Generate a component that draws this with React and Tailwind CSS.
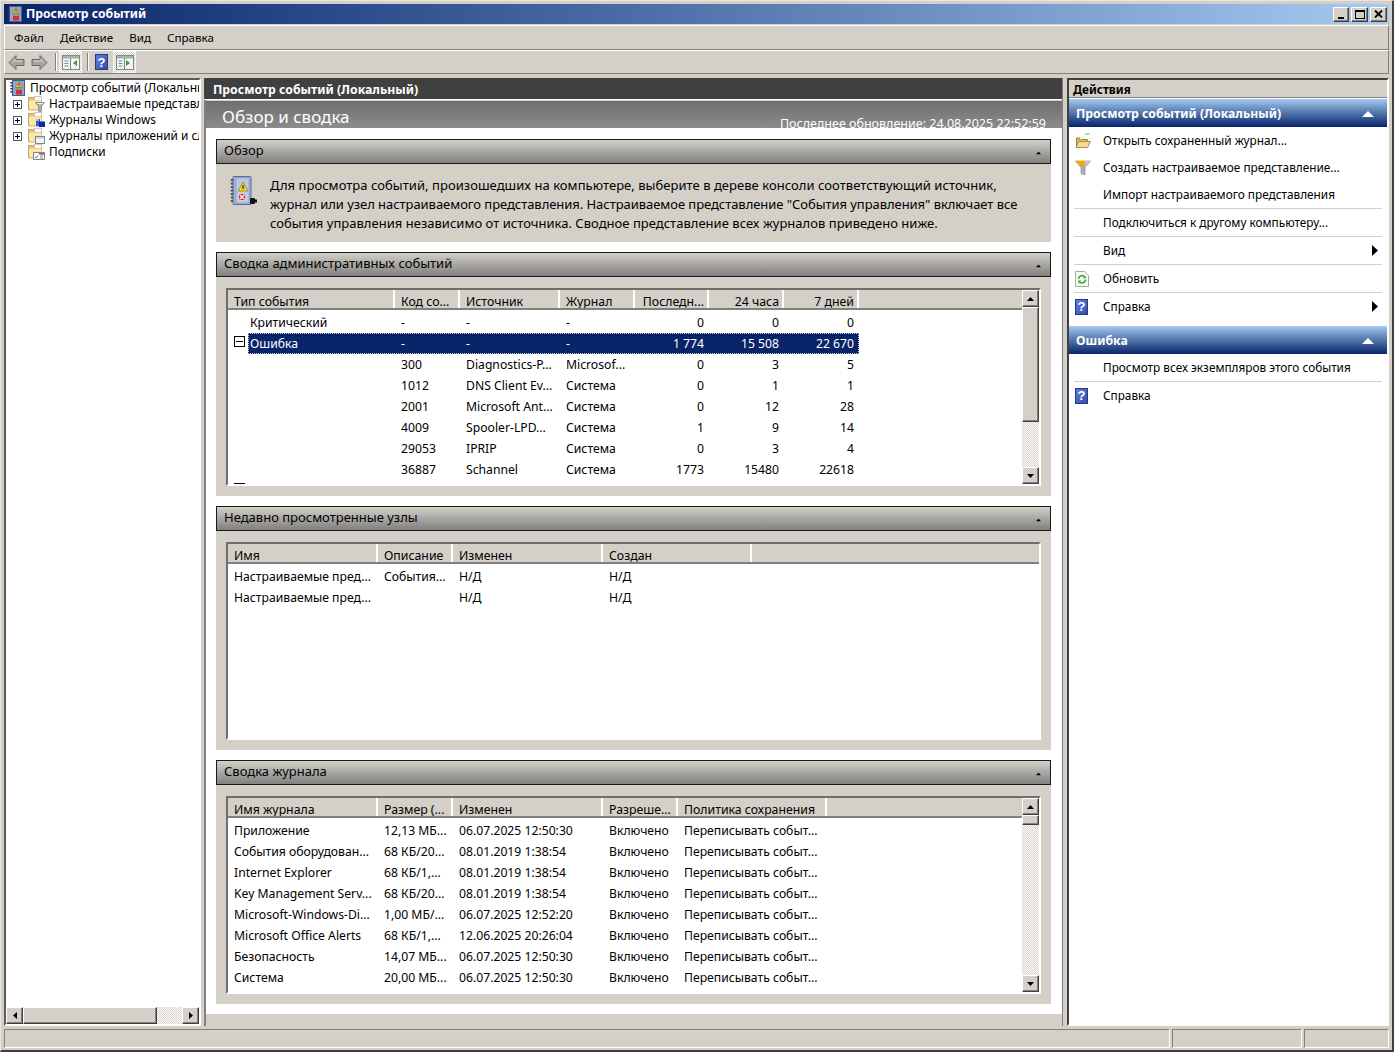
import React from 'react';

const bevel = 'border border-t-white border-l-white border-r-[#404040] border-b-[#404040] shadow-[inset_-1px_-1px_0_#808080] bg-[#d4d0c8]';
const checker = 'bg-[repeating-conic-gradient(#d4d0c8_0_25%,#ffffff_0_50%)] bg-[length:2px_2px]';

// little pictures
const LogIcon = ({ size = 16 }) => (
    <svg width={size} height={size} viewBox="0 0 16 16" className="shrink-0">
        <rect x="2.5" y="0.5" width="12" height="15" fill="#8ea4d4" stroke="#4a5a8c" />
        <path d="M1.5 2v1.5M1.5 5v1.5M1.5 8v1.5M1.5 11v1.5" stroke="#333" strokeWidth="2" />
        <path d="M9 1.5l3.5 6h-7z" fill="#f4d024" stroke="#8a6d00" strokeWidth="0.6" />
        <rect x="8.6" y="3.5" width="0.9" height="2.4" fill="#222" />
        <rect x="6" y="10" width="6" height="4.5" fill="#d03030" />
        <path d="M7.2 10V8.8a1.8 1.8 0 0 1 3.6 0V10" fill="none" stroke="#777" />
    </svg>
);

const BigLogIcon = () => (
    <svg width="28" height="32" viewBox="0 0 28 32" className="shrink-0">
        <rect x="3" y="0.5" width="18" height="28" rx="1" fill="#9fb4dc" stroke="#5a6a90" />
        <rect x="6" y="2" width="13" height="25" fill="#b8c8e8" stroke="#8496c0" strokeWidth="0.6" />
        <path d="M2 3v24" stroke="#555" strokeWidth="2.4" strokeDasharray="2 1.5" />
        <path d="M13 6l5 9h-10z" fill="#f6d425" stroke="#9a7a00" strokeWidth="0.7" />
        <rect x="12.4" y="9" width="1.3" height="4" fill="#333" />
        <circle cx="12" cy="21" r="4" fill="#d23a3a" stroke="#fff" strokeWidth="0.8" />
        <path d="M10 19l4 4M14 19l-4 4" stroke="#fff" strokeWidth="1.2" />
        <rect x="20" y="22" width="5" height="6" rx="1" fill="#111" />
        <rect x="24" y="23.5" width="3" height="3" fill="#111" />
    </svg>
);

const Folder = ({ overlay }) => (
    <svg width="17" height="16" viewBox="0 0 17 16" className="shrink-0">
        <path d="M0.5 1.5h5l1 1.5h7v11h-13z" fill="#e8c878" stroke="#c0a468" />
        <rect x="6.5" y="0.5" width="7" height="4" fill="#fff" stroke="#b0a890" strokeWidth="0.6" />
        <path d="M1 4.5h12.5v9H1z" fill="#fbe7a8" />
        {overlay === 'funnel' && (
            <g>
                <path d="M7.5 6.5h9l-3.2 4v5h-2.6v-5z" fill="#aeb4bc" stroke="#6a7078" strokeWidth="0.7" />
                <path d="M9 7.5h6" stroke="#e8ecf0" />
            </g>
        )}
        {overlay === 'win' && (
            <g>
                <rect x="8" y="7" width="4" height="7" fill="#3858d8" />
                <rect x="11" y="9.5" width="6" height="5.5" fill="#102a98" />
                <rect x="8" y="7" width="3" height="2" fill="#a0b8f4" />
            </g>
        )}
        {overlay === 'app' && (
            <g>
                <rect x="7.5" y="8.5" width="9" height="7" fill="#f4f4f4" stroke="#808890" />
                <rect x="8" y="9" width="8" height="1.5" fill="#c8ccd4" />
            </g>
        )}
        {overlay === 'sub' && (
            <g>
                <rect x="5.5" y="8.5" width="11" height="7" fill="#fff" stroke="#808890" />
                <rect x="11" y="9" width="5" height="1.6" fill="#d04040" />
                <path d="M7 13l1 1 2-3M12 12h3M12 14h3" stroke="#4060a0" strokeWidth="0.8" fill="none" />
            </g>
        )}
    </svg>
);

const HelpIcon = () => (
    <span className="w-[13px] h-[16px] shrink-0 flex items-center justify-center bg-gradient-to-br from-[#5f7fe0] to-[#3450a8] border border-[#27387c] text-white text-[13px] leading-none font-bold font-['Liberation_Sans']">?</span>
);

const OpenIcon = () => (
    <svg width="16" height="16" viewBox="0 0 16 16">
        <path d="M10 1h5" stroke="#50d050" />
        <path d="M1.5 5h4l1 1.5h6v7h-11z" fill="#d8b860" stroke="#a08840" />
        <path d="M1 14.5l2.5-6h12l-3 6z" fill="#f2dc98" stroke="#a89050" />
        <path d="M5 5.5h6M6 3.5h5" stroke="#f8f4e4" />
    </svg>
);

const FunnelIcon = () => (
    <svg width="16" height="16" viewBox="0 0 16 16">
        <path d="M0.5 1h15l-5.5 6.5V15l-4-1.5V7.5z" fill="#a8aeb8" stroke="#7c8290" strokeWidth="0.6" />
        <path d="M0.5 1h15L11 6H5z" fill="#f6a800" />
        <path d="M10 1h5.5L11 6h-1z" fill="#c0c4cc" />
    </svg>
);

const RefreshIcon = () => (
    <svg width="14" height="16" viewBox="0 0 14 16">
        <path d="M0.5 0.5h9l4 4v11h-13z" fill="#fbfbf6" stroke="#a8a8a0" />
        <path d="M3.5 8a3.5 3.5 0 0 1 6.4-1.8M10.5 8.5a3.5 3.5 0 0 1-6.4 1.8" fill="none" stroke="#38b038" strokeWidth="1.6" />
        <path d="M10.8 4.2v3h-3zM3.2 12.6v-3h3z" fill="#38b038" />
    </svg>
);

const Tri = ({ dir, className = '' }) => {
    const d = { up: 'M0 4L3.5 0 7 4z', down: 'M0 0L7 0 3.5 4z' };
    if (dir === 'left' || dir === 'right') {
        return (
            <svg width="4" height="7" viewBox="0 0 4 7" className={className}>
                <path d={dir === 'left' ? 'M4 0L0 3.5 4 7z' : 'M0 0L4 3.5 0 7z'} fill="#000" />
            </svg>
        );
    }
    return (
        <svg width="7" height="4" viewBox="0 0 7 4" className={className}>
            <path d={d[dir]} fill="#000" />
        </svg>
    );
};

const ScrollBtn = ({ dir, className = '' }) => (
    <div className={`${bevel} flex items-center justify-center shrink-0 ${className}`}>
        <Tri dir={dir} />
    </div>
);

const VScroll = ({ thumb }) => (
    <div className={`w-[17px] shrink-0 flex flex-col ${checker}`}>
        <ScrollBtn dir="up" className="h-[17px]" />
        <div className={`${bevel} shrink-0`} style={{ height: thumb }} />
        <div className="flex-1" />
        <ScrollBtn dir="down" className="h-[17px]" />
    </div>
);

// list view used by all three summary tables
const ListView = ({ columns, rows, scroll, children }) => (
    <div className="h-[198px] border-2 border-t-[#6e6e6e] border-l-[#6e6e6e] border-r-white border-b-white flex overflow-hidden bg-white">
        <div className="flex-1 min-w-0 flex flex-col overflow-hidden">
            <div className="flex h-5 shrink-0 bg-[#d4d0c8] border-b-2 border-b-[#808080]">
                {columns.map((c) => (
                    <div
                        key={c.title}
                        className={`shrink-0 pt-[5px] text-[12.3px] leading-[13px] whitespace-nowrap overflow-hidden border-r-2 border-r-white ${c.right ? 'text-right pl-1 pr-[3px]' : 'px-[6px]'}`}
                        style={{ width: c.w }}
                    >
                        {c.title}
                    </div>
                ))}
            </div>
            <div className="pt-[2px]">{children}</div>
            {rows && rows.map((r, i) => (
                <div key={i} className="flex h-[21px] shrink-0 first:mt-[2px]">
                    {columns.map((c, j) => (
                        <div key={j} className="shrink-0 px-[6px] pt-px text-[12.2px] leading-[20px] whitespace-nowrap overflow-hidden" style={{ width: c.w }}>
                            {r[j]}
                        </div>
                    ))}
                </div>
            ))}
        </div>
        {scroll}
    </div>
);

const Section = ({ title, children, className = '' }) => (
    <div className="mt-[10px] first:mt-0">
        <div className="h-[25px] border border-[#1a1a1a] bg-gradient-to-b from-[#d4d0c8] to-[#808080] flex items-center justify-between px-[7px] pb-[2px]">
            <span className="text-[13px]">{title}</span>
            <Tri dir="up" className="mt-1 mr-[1px] scale-75" />
        </div>
        <div className={`bg-[#d4d0c8] ${className}`}>{children}</div>
    </div>
);

const eventCols = [
    { title: 'Тип события', w: 167 },
    { title: 'Код со...', w: 65 },
    { title: 'Источник', w: 100 },
    { title: 'Журнал', w: 75 },
    { title: 'Последн...', w: 74, right: true },
    { title: '24 часа', w: 75, right: true },
    { title: '7 дней', w: 75, right: true },
];

const eventRows = [
    ['300', 'Diagnostics-P...', 'Microsof...', '0', '3', '5'],
    ['1012', 'DNS Client Ev...', 'Система', '0', '1', '1'],
    ['2001', 'Microsoft Ant...', 'Система', '0', '12', '28'],
    ['4009', 'Spooler-LPD...', 'Система', '1', '9', '14'],
    ['29053', 'IPRIP', 'Система', '0', '3', '4'],
    ['36887', 'Schannel', 'Система', '1773', '15480', '22618'],
];

const EventCells = ({ cells }) => (
    <>
        {cells.map((v, i) => (
            <div
                key={i}
                className={`shrink-0 px-[6px] pt-px text-[12.2px] leading-[20px] whitespace-nowrap ${i > 2 ? 'text-right pr-[5px]' : ''}`}
                style={{ width: eventCols[i + 1].w }}
            >
                {v}
            </div>
        ))}
    </>
);

const ExpandBox = () => (
    <div className="w-[11px] h-[11px] ml-[6px] mt-[3px] shrink-0 border border-black flex items-center justify-center">
        <div className="w-[7px] h-px bg-black" />
    </div>
);

const recentCols = [
    { title: 'Имя', w: 150 },
    { title: 'Описание', w: 75 },
    { title: 'Изменен', w: 150 },
    { title: 'Создан', w: 149 },
];
const recentRows = [
    ['Настраиваемые пред...', 'События...', 'Н/Д', 'Н/Д'],
    ['Настраиваемые пред...', '', 'Н/Д', 'Н/Д'],
];

const logCols = [
    { title: 'Имя журнала', w: 150 },
    { title: 'Размер (...', w: 75 },
    { title: 'Изменен', w: 150 },
    { title: 'Разреше...', w: 75 },
    { title: 'Политика сохранения', w: 149 },
];
const keep = 'Переписывать событ...';
const logRows = [
    ['Приложение', '12,13 МБ...', '06.07.2025 12:50:30', 'Включено', keep],
    ['События оборудован...', '68 КБ/20...', '08.01.2019 1:38:54', 'Включено', keep],
    ['Internet Explorer', '68 КБ/1,...', '08.01.2019 1:38:54', 'Включено', keep],
    ['Key Management Serv...', '68 КБ/20...', '08.01.2019 1:38:54', 'Включено', keep],
    ['Microsoft-Windows-Di...', '1,00 МБ/...', '06.07.2025 12:52:20', 'Включено', keep],
    ['Microsoft Office Alerts', '68 КБ/1,...', '12.06.2025 20:26:04', 'Включено', keep],
    ['Безопасность', '14,07 МБ...', '06.07.2025 12:50:30', 'Включено', keep],
    ['Система', '20,00 МБ...', '06.07.2025 12:50:30', 'Включено', keep],
];

const TreeRow = ({ expand, overlay, label }) => (
    <div className="flex items-center h-4 whitespace-nowrap">
        <div className="w-[9px] h-[9px] ml-[7px] shrink-0 flex items-center justify-center">
            {expand && (
                <div className="w-[9px] h-[9px] border border-[#555] relative flex items-center justify-center">
                    <div className="w-[5px] h-px bg-black" />
                    <div className="absolute w-px h-[5px] bg-black" />
                </div>
            )}
        </div>
        <div className="ml-[6px]"><Folder overlay={overlay} /></div>
        <span className="ml-[4px] text-[11.8px]">{label}</span>
    </div>
);

const ActionHeader = ({ title }) => (
    <div className="h-[28px] flex items-center justify-between pl-[7px] pr-[13px] pt-[2px] bg-gradient-to-b from-[#a6caf0] to-[#0a246a] shrink-0">
        <span className="text-white font-bold text-[12.25px]">{title}</span>
        <svg width="12" height="6" viewBox="0 0 12 6"><path d="M0 6L6 0l6 6z" fill="#fff" /></svg>
    </div>
);

const ActionRow = ({ icon, label, arrow, line }) => (
    <div className={`mx-[5px] flex items-center shrink-0 ${line ? 'h-7 border-b border-[#d4d0c8]' : 'h-[27px]'}`}>
        <div className="w-[29px] shrink-0 flex justify-start pl-px">{icon}</div>
        <span className="flex-1 text-[11.8px]">{label}</span>
        {arrow && <svg width="6" height="11" viewBox="0 0 6 11" className="mr-[4px]"><path d="M0 0l6 5.5L0 11z" fill="#000" /></svg>}
    </div>
);

const ToolArrow = ({ flip }) => (
    <svg width="17" height="15" viewBox="0 0 17 15" className={flip ? '-scale-x-100' : ''}>
        <path d="M1 7.5l7-7v4h8v6H8v4z" fill="#a4a4a0" stroke="#6c6c66" />
        <path d="M4 7.5l3-3v1.5h7" fill="none" stroke="#d8d8d0" />
    </svg>
);

const PaneToggle = ({ color, right }) => (
    <div className={`w-[23px] h-[22px] ${checker} border border-[#f4f4f0] flex items-center justify-center`}>
        <svg width="18" height="15" viewBox="0 0 18 15">
            <rect x="0.5" y="0.5" width="17" height="14" fill="#f4f6f4" stroke="#808880" />
            <rect x="1" y="1" width="16" height="2.5" fill="#a8b0b0" />
            <path d="M8.5 3v11" stroke="#808880" />
            <path d="M2.5 6h4M2.5 8.5h4M2.5 11h4" stroke="#7088b0" />
            <path d={right ? 'M10 5v6l4-3z' : 'M15 5v6l-4-3z'} fill={color} />
        </svg>
    </div>
);

const App = () => {
    return (
        <div className="w-[1394px] h-[1052px] bg-[#d4d0c8] flex flex-col overflow-hidden text-black font-['Noto_Sans',sans-serif] border border-b-2 border-r-2 border-t-[#e8e6e0] border-l-[#e8e6e0] border-r-[#404040] border-b-[#404040]">
            {/* title bar */}
            <div className="mx-[3px] mt-[3px] h-5 shrink-0 flex items-center bg-gradient-to-r from-[#0a246a] to-[#a6caf0]">
                <div className="ml-[3px]"><LogIcon size={16} /></div>
                <span className="ml-[3px] text-white font-bold text-[12.2px]">Просмотр событий</span>
                <div className="ml-auto mr-[2px] flex items-center">
                    <div className={`${bevel} w-[16px] h-[15px] flex items-end justify-center pb-[2px]`}><div className="w-[6px] h-[2px] bg-black" /></div>
                    <div className={`${bevel} w-[17px] h-[15px] ml-[2px] flex items-center justify-center`}><div className="w-[10px] h-[9px] border border-black border-t-2" /></div>
                    <div className={`${bevel} w-[17px] h-[15px] ml-[2px] flex items-center justify-center`}>
                        <svg width="9" height="8" viewBox="0 0 9 8"><path d="M1 0.5l7 7M8 0.5l-7 7" stroke="#000" strokeWidth="1.8" /></svg>
                    </div>
                </div>
            </div>

            {/* menu */}
            <div className="mx-[3px] mt-[1px] h-[25px] shrink-0 flex items-center pl-px pt-px border-t border-l border-white border-b border-b-[#808080] border-r border-r-[#808080]">
                {['Файл', 'Действие', 'Вид', 'Справка'].map((m) => (
                    <span key={m} className="px-[8px] text-[11.6px]">{m}</span>
                ))}
            </div>

            {/* toolbar */}
            <div className="mx-[3px] h-[24px] shrink-0 flex items-center border-t border-l border-white border-b border-b-[#808080] border-r border-r-[#808080]">
                <div className="ml-[3px]"><ToolArrow /></div>
                <div className="ml-[6px]"><ToolArrow flip /></div>
                <div className="ml-[7px] w-[2px] h-[18px] border-l border-l-[#808080] border-r border-r-white" />
                <div className="ml-[2px]"><PaneToggle color="#30a040" /></div>
                <div className="ml-[5px] w-[2px] h-[18px] border-l border-l-[#808080] border-r border-r-white" />
                <div className="ml-[6px]"><HelpIcon /></div>
                <div className="ml-[5px]"><PaneToggle color="#30a040" right /></div>
            </div>

            {/* main area */}
            <div className="flex-1 min-h-0 mt-[4px] ml-[3px] mr-[3px] flex">
                {/* tree */}
                <div className="w-[197px] shrink-0 border-2 border-t-[#5a5a5a] border-l-[#5a5a5a] border-r-white border-b-white bg-white flex flex-col overflow-hidden">
                    <div className="flex-1 overflow-hidden">
                        <div className="flex items-center h-4 whitespace-nowrap">
                            <div className="ml-[4px]"><LogIcon /></div>
                            <span className="ml-[4px] text-[12px]">Просмотр событий (Локальный)</span>
                        </div>
                        <TreeRow expand overlay="funnel" label="Настраиваемые представления" />
                        <TreeRow expand overlay="win" label="Журналы Windows" />
                        <TreeRow expand overlay="app" label="Журналы приложений и служб" />
                        <TreeRow overlay="sub" label="Подписки" />
                    </div>
                    <div className={`h-[17px] shrink-0 flex ${checker}`}>
                        <ScrollBtn dir="left" className="w-[17px]" />
                        <div className={`${bevel} w-[134px]`} />
                        <div className="flex-1" />
                        <ScrollBtn dir="right" className="w-[17px]" />
                    </div>
                </div>

                {/* centre */}
                <div className="w-[859px] ml-[3px] shrink-0 flex flex-col border-r border-r-[#808080]">
                    <div className="h-[22px] shrink-0 bg-[#404040] text-white font-bold text-[12.25px] leading-[24px] pl-[9px] border-b border-b-white">
                        Просмотр событий (Локальный)
                    </div>
                    <div className="flex-1 min-h-0 flex flex-col border-l-2 border-l-[#808080]">
                        <div className="h-[27px] mt-px shrink-0 bg-gradient-to-b from-[#6e6e6e] to-[#8c8c8c] flex justify-between overflow-hidden">
                            <span className="ml-[16px] mt-[4px] text-white text-[17px] leading-[23px]">Обзор и сводка</span>
                            <span className="mr-[16px] mt-[14px] text-white text-[12.5px]">Последнее обновление: 24.08.2025 22:52:59</span>
                        </div>
                        <div className="flex-1 min-h-0 bg-white pt-[11px] pl-[10px] pr-[11px] flex flex-col">
                            <Section title="Обзор" className="h-[78px] flex pl-[14px] pt-[12px]">
                                <BigLogIcon />
                                <p className="ml-[12px] mt-0 text-[13px] leading-[19px] whitespace-nowrap">
                                    <span className="tracking-[0.04px]">Для просмотра событий, произошедших на компьютере, выберите в дереве консоли соответствующий источник,</span><br />
                                    <span className="tracking-[-0.05px]">журнал или узел настраиваемого представления. Настраиваемое представление "События управления" включает все</span><br />
                                    <span className="tracking-[0.02px]">события управления независимо от источника. Сводное представление всех журналов приведено ниже.</span>
                                </p>
                            </Section>

                            <Section title="Сводка административных событий" className="px-[10px] pt-[11px] pb-[10px]">
                                <ListView columns={eventCols} scroll={<VScroll thumb={115} />}>
                                    <div className="flex h-[21px]">
                                        <div className="w-[167px] shrink-0 pl-[22px] pt-px text-[12.2px] leading-[20px]">Критический</div>
                                        <EventCells cells={['-', '-', '-', '0', '0', '0']} />
                                    </div>
                                    <div className="flex h-[21px]">
                                        <div className="w-[20px] shrink-0 flex"><ExpandBox /></div>
                                        <div className="flex h-[21px] bg-[#0a246a] text-white outline-1 outline-dotted outline-offset-[-1px] outline-[#d4d0c8]">
                                            <div className="w-[147px] shrink-0 pl-[2px] pt-px text-[12.2px] leading-[20px]">Ошибка</div>
                                            <EventCells cells={['-', '-', '-', '1 774', '15 508', '22 670']} />
                                        </div>
                                    </div>
                                    {eventRows.map((r) => (
                                        <div key={r[0]} className="flex h-[21px]">
                                            <div className="w-[167px] shrink-0" />
                                            <EventCells cells={r} />
                                        </div>
                                    ))}
                                    <div className="flex h-[21px]"><ExpandBox /></div>
                                </ListView>
                            </Section>

                            <Section title="Недавно просмотренные узлы" className="px-[10px] pt-[11px] pb-[10px]">
                                <ListView columns={recentCols} rows={recentRows} />
                            </Section>

                            <Section title="Сводка журнала" className="px-[10px] pt-[11px] pb-[10px]">
                                <ListView columns={logCols} rows={logRows} scroll={<VScroll thumb={10} />} />
                            </Section>

                            <div className="mt-[10px] -ml-[10px] -mr-[11px] flex-1 bg-[#d4d0c8]" />
                        </div>
                    </div>
                </div>

                {/* actions */}
                <div className="flex-1 ml-[4px] flex flex-col border-2 border-t-[#404040] border-l-[#404040] border-r-white border-b-white bg-white overflow-hidden">
                    <div className="h-[17px] shrink-0 bg-[#d4d0c8] font-bold text-[11.7px] leading-[16px] pt-px pl-[4px]">Действия</div>
                    <div className="h-px shrink-0 bg-[#808080]" />
                    <div className="h-px shrink-0 bg-white" />
                    <ActionHeader title="Просмотр событий (Локальный)" />
                    <ActionRow icon={<OpenIcon />} label="Открыть сохраненный журнал..." />
                    <ActionRow icon={<FunnelIcon />} label="Создать настраиваемое представление..." />
                    <ActionRow label="Импорт настраиваемого представления" line />
                    <ActionRow label="Подключиться к другому компьютеру..." line />
                    <ActionRow label="Вид" arrow line />
                    <ActionRow icon={<RefreshIcon />} label="Обновить" line />
                    <ActionRow icon={<HelpIcon />} label="Справка" arrow />
                    <div className="h-[6px] shrink-0" />
                    <ActionHeader title="Ошибка" />
                    <ActionRow label="Просмотр всех экземпляров этого события" line />
                    <ActionRow icon={<HelpIcon />} label="Справка" />
                </div>
            </div>

            {/* status bar */}
            <div className="h-[19px] mt-[3px] mb-[2px] mx-[3px] shrink-0 flex gap-[2px]">
                <div className="w-[1166px] border border-t-[#808080] border-l-[#808080] border-r-white border-b-white" />
                <div className="w-[130px] border border-t-[#808080] border-l-[#808080] border-r-white border-b-white" />
                <div className="flex-1 border border-t-[#808080] border-l-[#808080] border-r-white border-b-white" />
            </div>
        </div>
    );
};

export default App;
